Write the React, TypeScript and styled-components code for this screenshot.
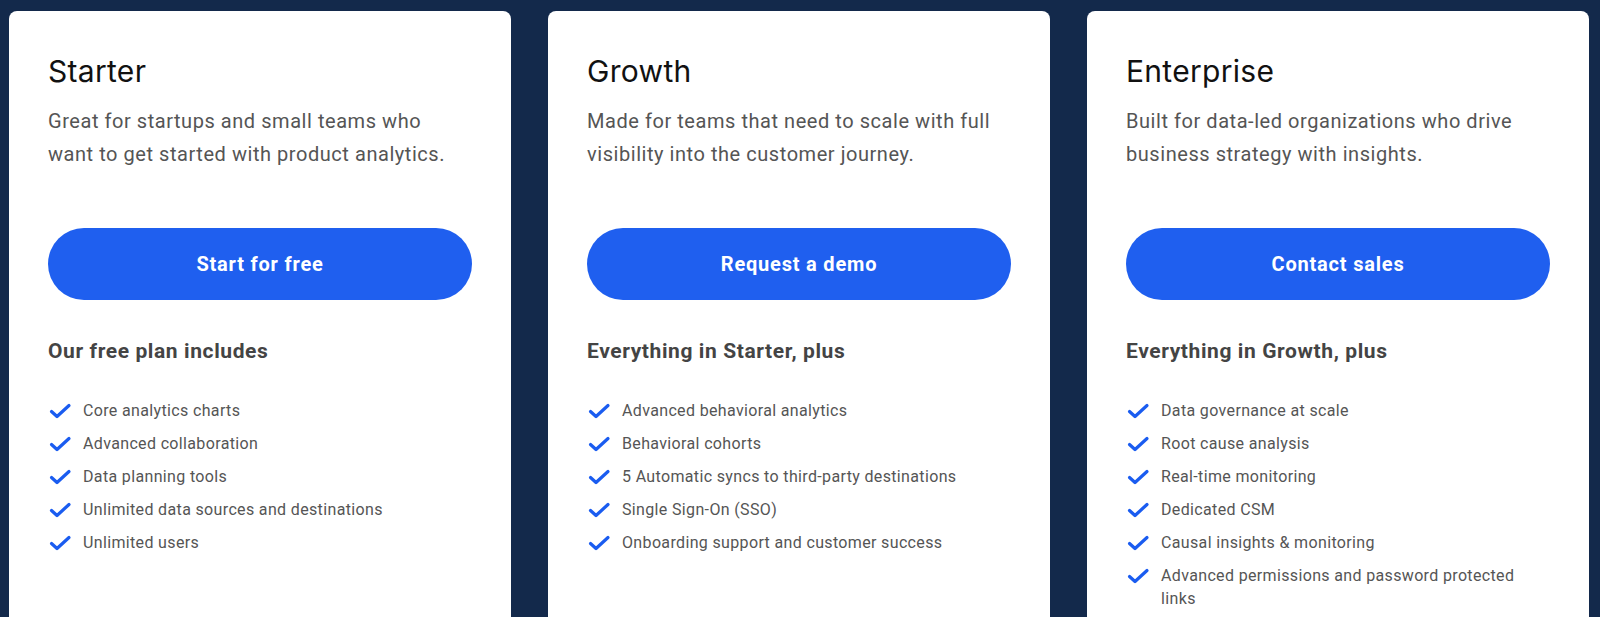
import styled, { createGlobalStyle } from 'styled-components'

const GlobalStyle = createGlobalStyle`
    html, body {
        margin: 0;
        padding: 0;
        background-color: #13294b;
        overflow: hidden;
    }
`

const plans = [
    {
        name: 'Starter',
        description: 'Great for startups and small teams who want to get started with product analytics.',
        cta: 'Start for free',
        heading: 'Our free plan includes',
        features: [
            'Core analytics charts',
            'Advanced collaboration',
            'Data planning tools',
            'Unlimited data sources and destinations',
            'Unlimited users',
        ],
    },
    {
        name: 'Growth',
        description: 'Made for teams that need to scale with full visibility into the customer journey.',
        cta: 'Request a demo',
        heading: 'Everything in Starter, plus',
        features: [
            'Advanced behavioral analytics',
            'Behavioral cohorts',
            '5 Automatic syncs to third-party destinations',
            'Single Sign-On (SSO)',
            'Onboarding support and customer success',
        ],
    },
    {
        name: 'Enterprise',
        description: 'Built for data-led organizations who drive business strategy with insights.',
        cta: 'Contact sales',
        heading: 'Everything in Growth, plus',
        features: [
            'Data governance at scale',
            'Root cause analysis',
            'Real-time monitoring',
            'Dedicated CSM',
            'Causal insights & monitoring',
            'Advanced permissions and password protected links',
        ],
    },
]

const Page = styled.div`
    display: flex;
    gap: 37px;
    padding: 11px 0 0 9px;
    height: 617px;
    box-sizing: border-box;
`

const Card = styled.div`
    flex: 0 0 502px;
    height: 660px;
    box-sizing: border-box;
    padding: 42px 39px 0 39px;
    background-color: #ffffff;
    border-radius: 8px;
    display: flex;
    flex-direction: column;
`

const Title = styled.h2`
    margin: 0;
    font-family: Inter, "Noto Sans", sans-serif;
    font-weight: 400;
    font-size: 30px;
    line-height: 36px;
    letter-spacing: 0.3px;
    color: #111111;
`

const Description = styled.p`
    margin: 16px 0 0 0;
    font-family: Roboto, "Noto Sans", sans-serif;
    font-weight: 400;
    font-size: 20px;
    line-height: 33px;
    letter-spacing: 0.55px;
    color: #555555;
`

const CtaButton = styled.button`
    margin-top: 57px;
    height: 72px;
    width: 100%;
    border: none;
    border-radius: 36px;
    background-color: #1f5fef;
    color: #ffffff;
    font-family: Roboto, "Noto Sans", sans-serif;
    font-weight: 700;
    font-size: 20px;
    letter-spacing: 0.8px;
    cursor: pointer;
`

const IncludesHeading = styled.h3`
    margin: 37px 0 0 0;
    font-family: Roboto, "Noto Sans", sans-serif;
    font-weight: 700;
    font-size: 21px;
    line-height: 28px;
    letter-spacing: 0.6px;
    color: #444444;
`

const FeatureList = styled.ul`
    list-style: none;
    margin: 34px 0 0 0;
    padding: 0;
    display: flex;
    flex-direction: column;
    gap: 10px;
`

const FeatureItem = styled.li`
    display: flex;
    align-items: flex-start;
    gap: 11px;
    font-family: Roboto, "Noto Sans", sans-serif;
    font-size: 16px;
    line-height: 23px;
    letter-spacing: 0.35px;
    color: #555555;

    & > span {
        max-width: 375px;
    }
`

const CheckIcon = styled.svg`
    flex: 0 0 24px;
    width: 24px;
    height: 23px;
`

function Check() {
    return (
        <CheckIcon viewBox="0 0 24 23" fill="none">
            <polyline points="3.5,12.5 9,17.5 21,6.5" stroke="#1a5cf0" strokeWidth="3.2" strokeLinecap="round" strokeLinejoin="round" />
        </CheckIcon>
    )
}

export default function App() {
    return (
        <>
            <GlobalStyle />
            <Page>
                {plans.map((plan) => (
                    <Card key={plan.name}>
                        <Title>{plan.name}</Title>
                        <Description>{plan.description}</Description>
                        <CtaButton>{plan.cta}</CtaButton>
                        <IncludesHeading>{plan.heading}</IncludesHeading>
                        <FeatureList>
                            {plan.features.map((feature) => (
                                <FeatureItem key={feature}>
                                    <Check />
                                    <span>{feature}</span>
                                </FeatureItem>
                            ))}
                        </FeatureList>
                    </Card>
                ))}
            </Page>
        </>
    )
}
